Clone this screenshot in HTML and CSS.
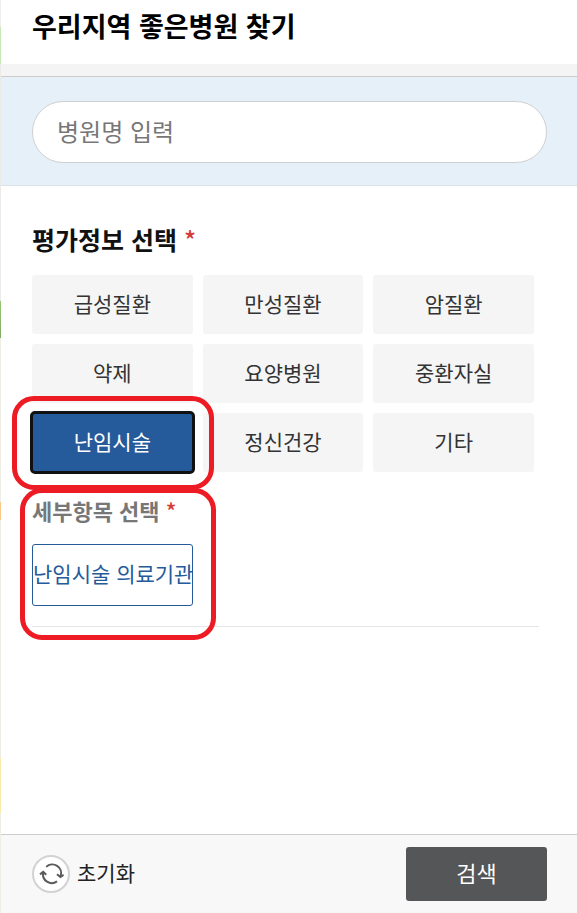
FILE: index.html
```html
<!DOCTYPE html>
<html lang="ko">
<head>
    <meta charset="UTF-8">
    <meta name="viewport" content="width=device-width, initial-scale=1.0">
    <title>우리지역 좋은병원 찾기</title>
    <link rel="stylesheet" href="styles.css">
</head>
<body>
    <div class="map-edge"></div>
    <form class="panel">
        <header class="panel-header">
            <h1>우리지역 좋은병원 찾기</h1>
        </header>

        <div class="search-area">
            <input type="text" class="search-input" placeholder="병원명 입력" aria-label="병원명 입력">
        </div>

        <main class="content">
            <h2>평가정보 선택 <span class="required">*</span></h2>
            <div class="options">
                <button type="button" class="option">급성질환</button>
                <button type="button" class="option">만성질환</button>
                <button type="button" class="option">암질환</button>
                <button type="button" class="option">약제</button>
                <button type="button" class="option">요양병원</button>
                <button type="button" class="option">중환자실</button>
                <div class="marked">
                    <button type="button" class="option selected">난임시술</button>
                    <span class="mark mark-option"></span>
                </div>
                <button type="button" class="option">정신건강</button>
                <button type="button" class="option">기타</button>
            </div>

            <section class="detail">
                <div class="marked">
                    <h3>세부항목 선택 <span class="required">*</span></h3>
                    <div class="options">
                        <button type="button" class="option outlined">난임시술 의료기관</button>
                    </div>
                    <span class="mark mark-detail"></span>
                </div>
            </section>
        </main>

        <footer class="panel-footer">
            <button type="reset" class="reset">
                <span class="reset-icon">
                    <svg width="26" height="26" viewBox="0 0 26 26" fill="none" stroke="#5a5a5a" stroke-width="2">
                        <path d="M8.2 5.9A8.8 8.8 0 0 1 22.6 15.2"/>
                        <path d="M19 13.2L22.4 16L25.6 13.8"/>
                        <path d="M19 20.4A8.8 8.8 0 0 1 5.2 11.4"/>
                        <path d="M2 13.4L5.2 10.8L8.2 13.8"/>
                    </svg>
                </span>
                <span class="reset-label">초기화</span>
            </button>
            <button type="submit" class="submit">검색</button>
        </footer>
    </form>
</body>
</html>
```

FILE: styles.css
```css
* {
    box-sizing: border-box;
}
body {
    display: flex;
    min-height: 100vh;
    margin: 0;
    background-color: #fff;
    color: #111;
    font-family: "Noto Sans CJK KR", sans-serif;
}
h1, h2, h3 {
    margin: 0;
    font-weight: 700;
}
button, input {
    font-family: inherit;
}
button {
    padding: 0 0 4px;
    border: none;
    cursor: pointer;
}

/* visible edge of the map behind the panel */
.map-edge {
    width: 1px;
    background: linear-gradient(#eee 3%, #c8e6b8 3%, #c8e6b8 7%, #eceae6 7%, #eceae6 33%, #94c973 33%, #7faa60 37%, #eeede6 37%, #eeede6 55%, #f8c888 55%, #f8c888 57%, #eeede6 57%, #eeede6 83%, #faebaa 83%, #faebaa 89%, #eeede6 89%);
}
.panel {
    flex: 1;
    display: flex;
    flex-direction: column;
}
.panel-header {
    padding: 6px 31px 18px;
    border-bottom: 12px solid #f4f4f4;
}
h1 {
    color: #000;
    font-size: 27px;
    line-height: 40px;
}

.search-area {
    padding: 24px 30px 22px 31px;
    background-color: #e6f0f9;
    border-top: 1px solid #ccc;
    border-bottom: 1px solid #dbe3ea;
}
.search-input {
    display: block;
    width: 100%;
    height: 62px;
    padding: 0 24px 3px;
    border: 1px solid #d0d0d0;
    border-radius: 31px;
    background-color: #fff;
    font-size: 24px;
}
.search-input::placeholder {
    color: #777;
}

.content {
    flex: 1;
    padding: 35px 38px 36px 31px;
}
h2 {
    margin-bottom: 18px;
    font-size: 25px;
    line-height: 36px;
}
.required {
    color: #d53c35;
    font-weight: 500;
}
.options {
    display: grid;
    grid-template-columns: repeat(3, minmax(0, 1fr));
    gap: 10px;
    padding-right: 5px;
}
.option {
    width: 100%;
    height: 59px;
    border-radius: 3px;
    background-color: #f5f5f5;
    color: #333;
    font-size: 21px;
    white-space: nowrap;
}
.option.selected {
    background-color: #255a9b;
    color: #fff;
    outline: 3px solid #111;
    outline-offset: -1px;
}
.option.outlined {
    height: 62px;
    border: 1px solid #255a9b;
    background-color: #fff;
    color: #255a9b;
}
.detail {
    padding: 20px 0;
    border-bottom: 1px solid #e5e5e5;
}
h3 {
    margin-bottom: 16px;
    color: #777;
    font-size: 22px;
    line-height: 36px;
}

/* red rings that point out the chosen items */
.marked {
    position: relative;
}
.mark {
    position: absolute;
    border: 5px solid #ed1c24;
    border-radius: 22px;
    pointer-events: none;
}
.mark-option {
    top: -17px;
    bottom: -18px;
    left: -20px;
    right: -21px;
}
.mark-detail {
    top: -4px;
    bottom: -34px;
    left: -12px;
    width: 196px;
}

.panel-footer {
    display: flex;
    align-items: center;
    justify-content: space-between;
    padding: 12px 30px 12px 31px;
    background-color: #f8f8f8;
    border-top: 1px solid #ccc;
}
.reset {
    display: flex;
    align-items: center;
    gap: 7px;
    padding: 0;
    background: none;
    color: #222;
    font-size: 21px;
}
.reset-label {
    padding-bottom: 4px;
}
.reset-icon {
    display: flex;
    align-items: center;
    justify-content: center;
    width: 38px;
    height: 38px;
    border: 2px solid #d2d2d2;
    border-radius: 50%;
    background-color: #fff;
}
.submit {
    width: 141px;
    height: 54px;
    border-radius: 3px;
    background-color: #555658;
    color: #fff;
    font-size: 22px;
}
```
